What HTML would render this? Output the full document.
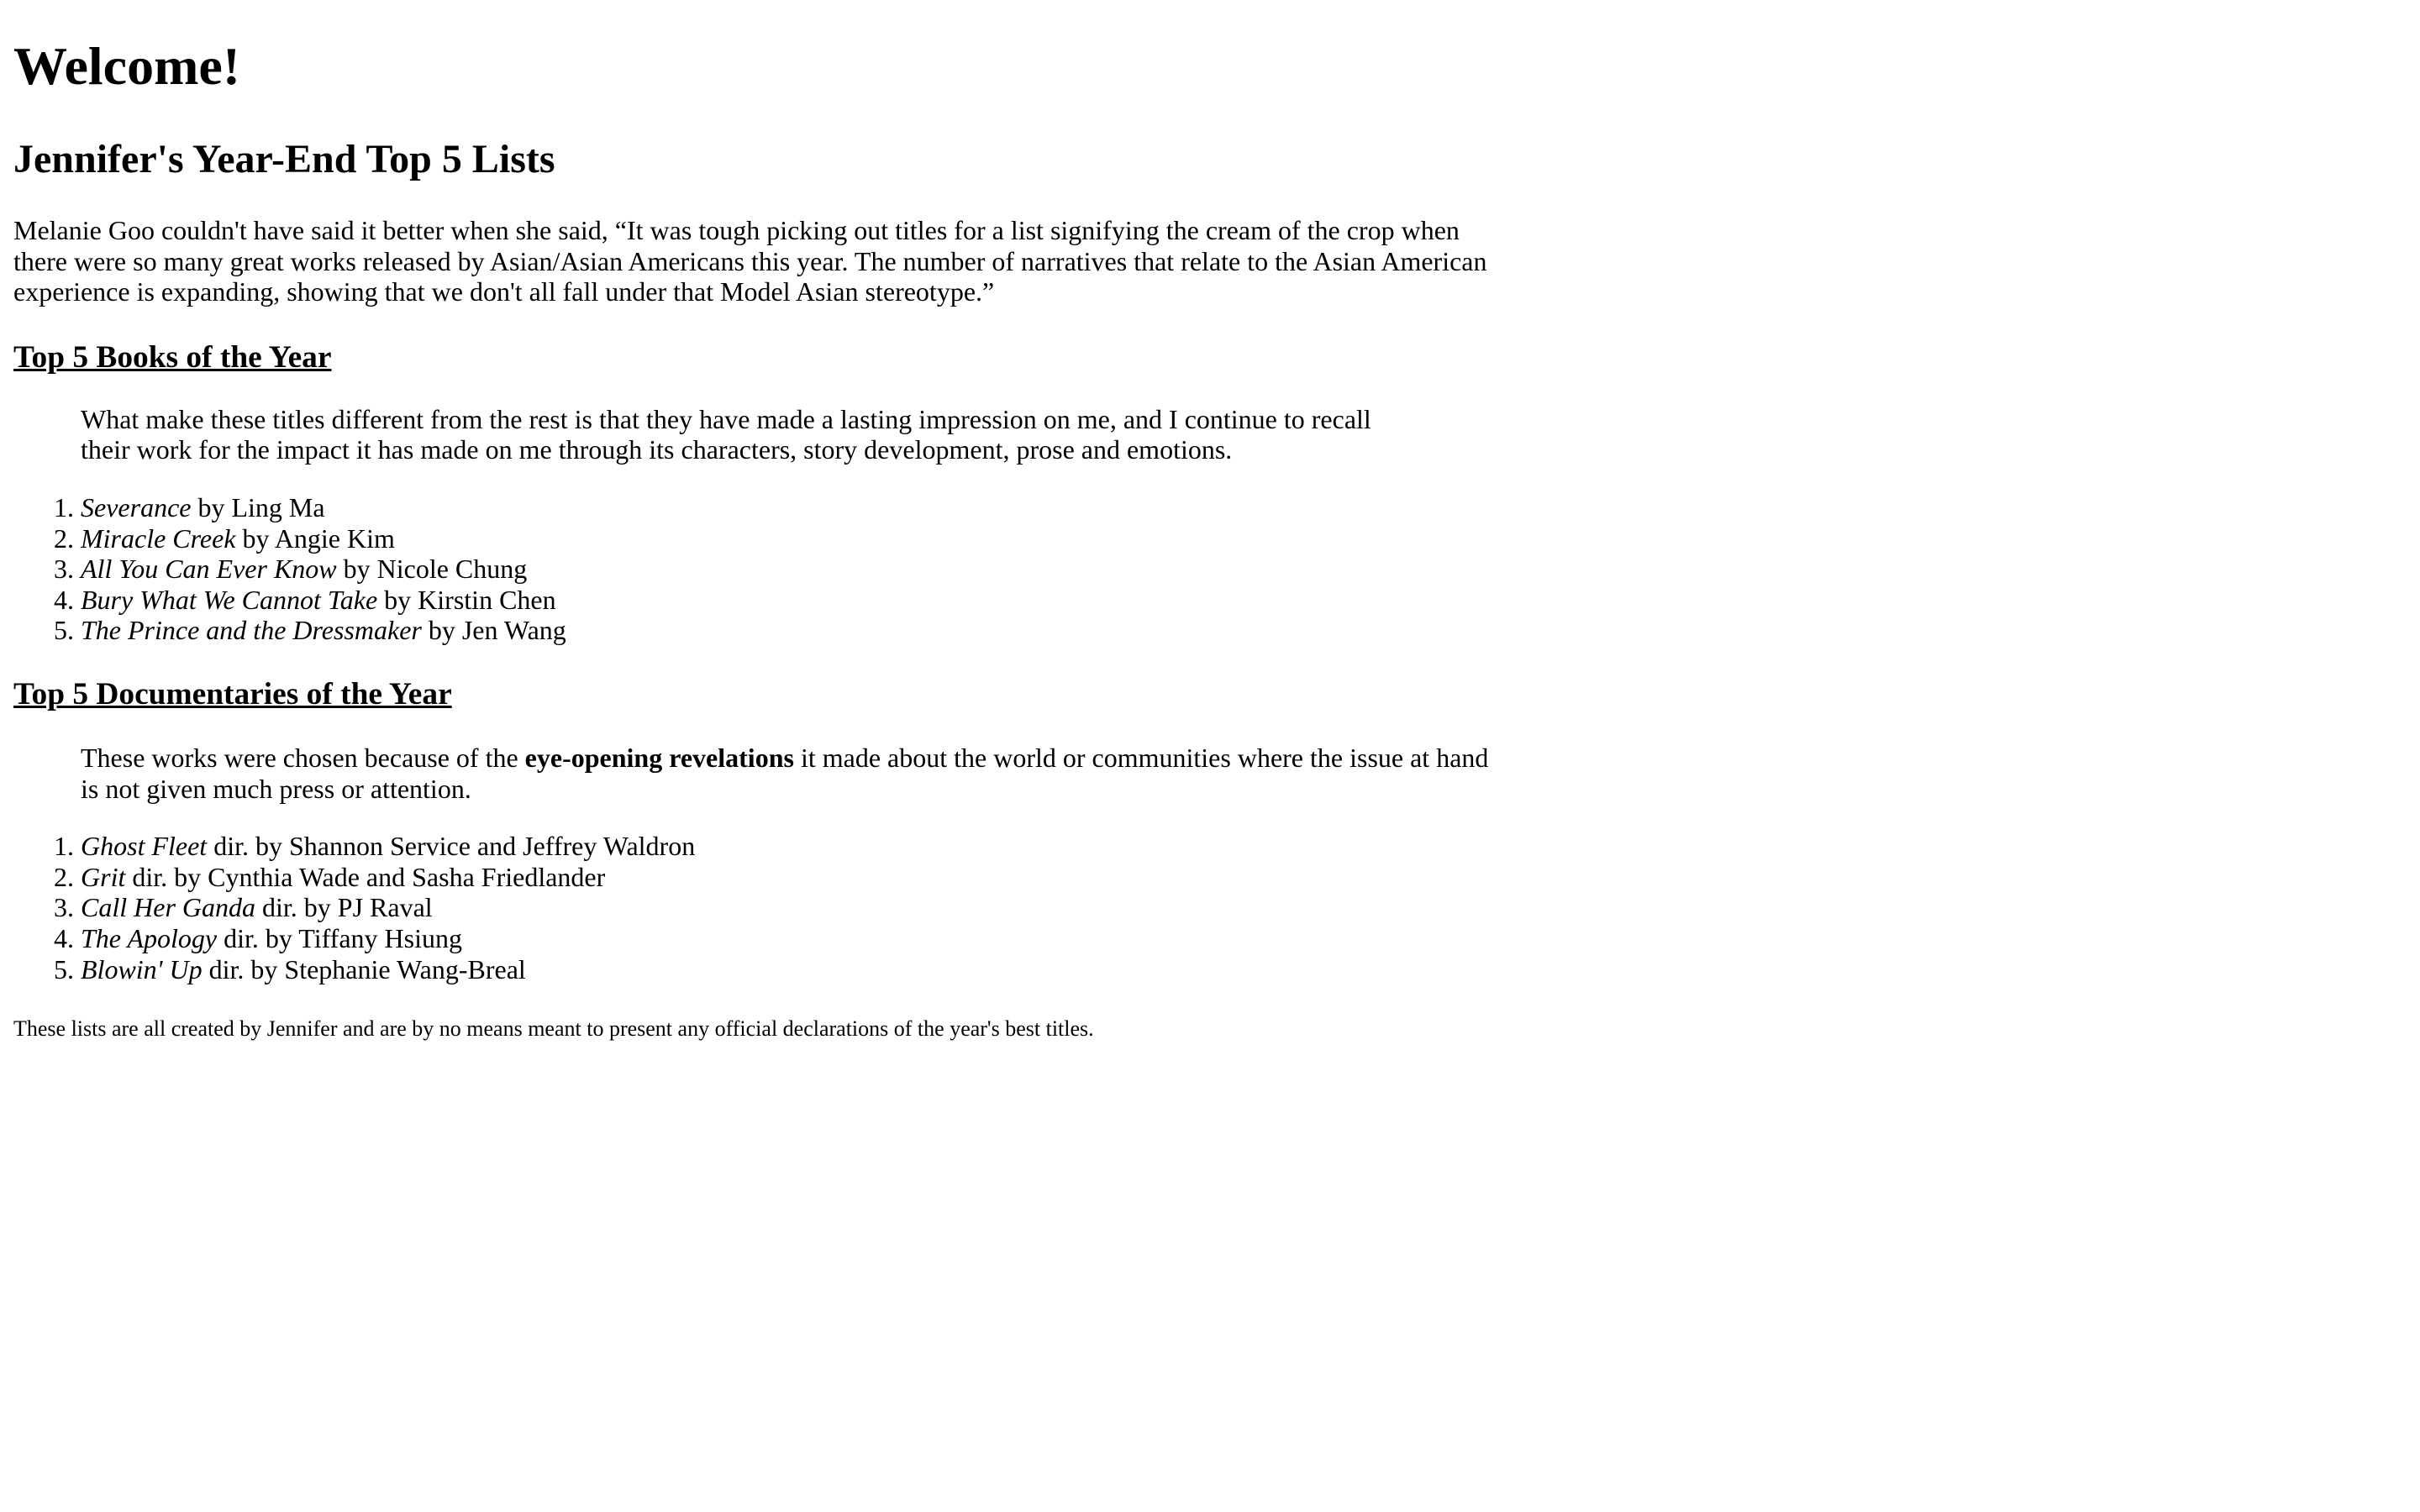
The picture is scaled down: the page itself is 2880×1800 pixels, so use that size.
<!DOCTYPE html>
<html>
<head>
<meta charset="utf-8">
<style>
html{zoom:2;background:#fff}
body{margin:8px;width:960px;font-family:"Liberation Serif","Times New Roman",serif;font-size:16px;line-height:18.3px;color:#000;white-space:nowrap}
h1{font-size:32px;line-height:37px;margin:21px 0}
h2{font-size:24px;line-height:28px;margin:23px 0 19px}
h3{font-size:18.7px;line-height:21.5px;margin:19px 0 17px;text-decoration:underline}
h3.d{margin-top:18px;margin-bottom:18px}
p{margin:16px 0}
blockquote{margin:16px 40px}
ol{margin:15.5px 0 16px;padding-left:40px}
ol.d{margin-top:14.5px}
small{font-size:13px}
p.f{margin-top:10px}
</style>
</head>
<body>
<h1>Welcome!</h1>
<h2>Jennifer's Year-End Top 5 Lists</h2>
<p>Melanie Goo couldn't have said it better when she said, “It was tough picking out titles for a list signifying the cream of the crop when<br>there were so many great works released by Asian/Asian Americans this year. The number of narratives that relate to the Asian American<br>experience is expanding, showing that we don't all fall under that Model Asian stereotype.”</p>
<h3>Top 5 Books of the Year</h3>
<blockquote>What make these titles different from the rest is that they have made a lasting impression on me, and I continue to recall<br>their work for the impact it has made on me through its characters, story development, prose and emotions.</blockquote>
<ol>
<li><i>Severance</i> by Ling Ma</li>
<li><i>Miracle Creek</i> by Angie Kim</li>
<li><i>All You Can Ever Know</i> by Nicole Chung</li>
<li><i>Bury What We Cannot Take</i> by Kirstin Chen</li>
<li><i>The Prince and the Dressmaker</i> by Jen Wang</li>
</ol>
<h3 class="d">Top 5 Documentaries of the Year</h3>
<blockquote>These works were chosen because of the <b>eye-opening revelations</b> it made about the world or communities where the issue at hand<br>is not given much press or attention.</blockquote>
<ol class="d">
<li><i>Ghost Fleet</i> dir. by Shannon Service and Jeffrey Waldron</li>
<li><i>Grit</i> dir. by Cynthia Wade and Sasha Friedlander</li>
<li><i>Call Her Ganda</i> dir. by PJ Raval</li>
<li><i>The Apology</i> dir. by Tiffany Hsiung</li>
<li><i>Blowin' Up</i> dir. by Stephanie Wang-Breal</li>
</ol>
<p class="f"><small>These lists are all created by Jennifer and are by no means meant to present any official declarations of the year's best titles.</small></p>
</body>
</html>
